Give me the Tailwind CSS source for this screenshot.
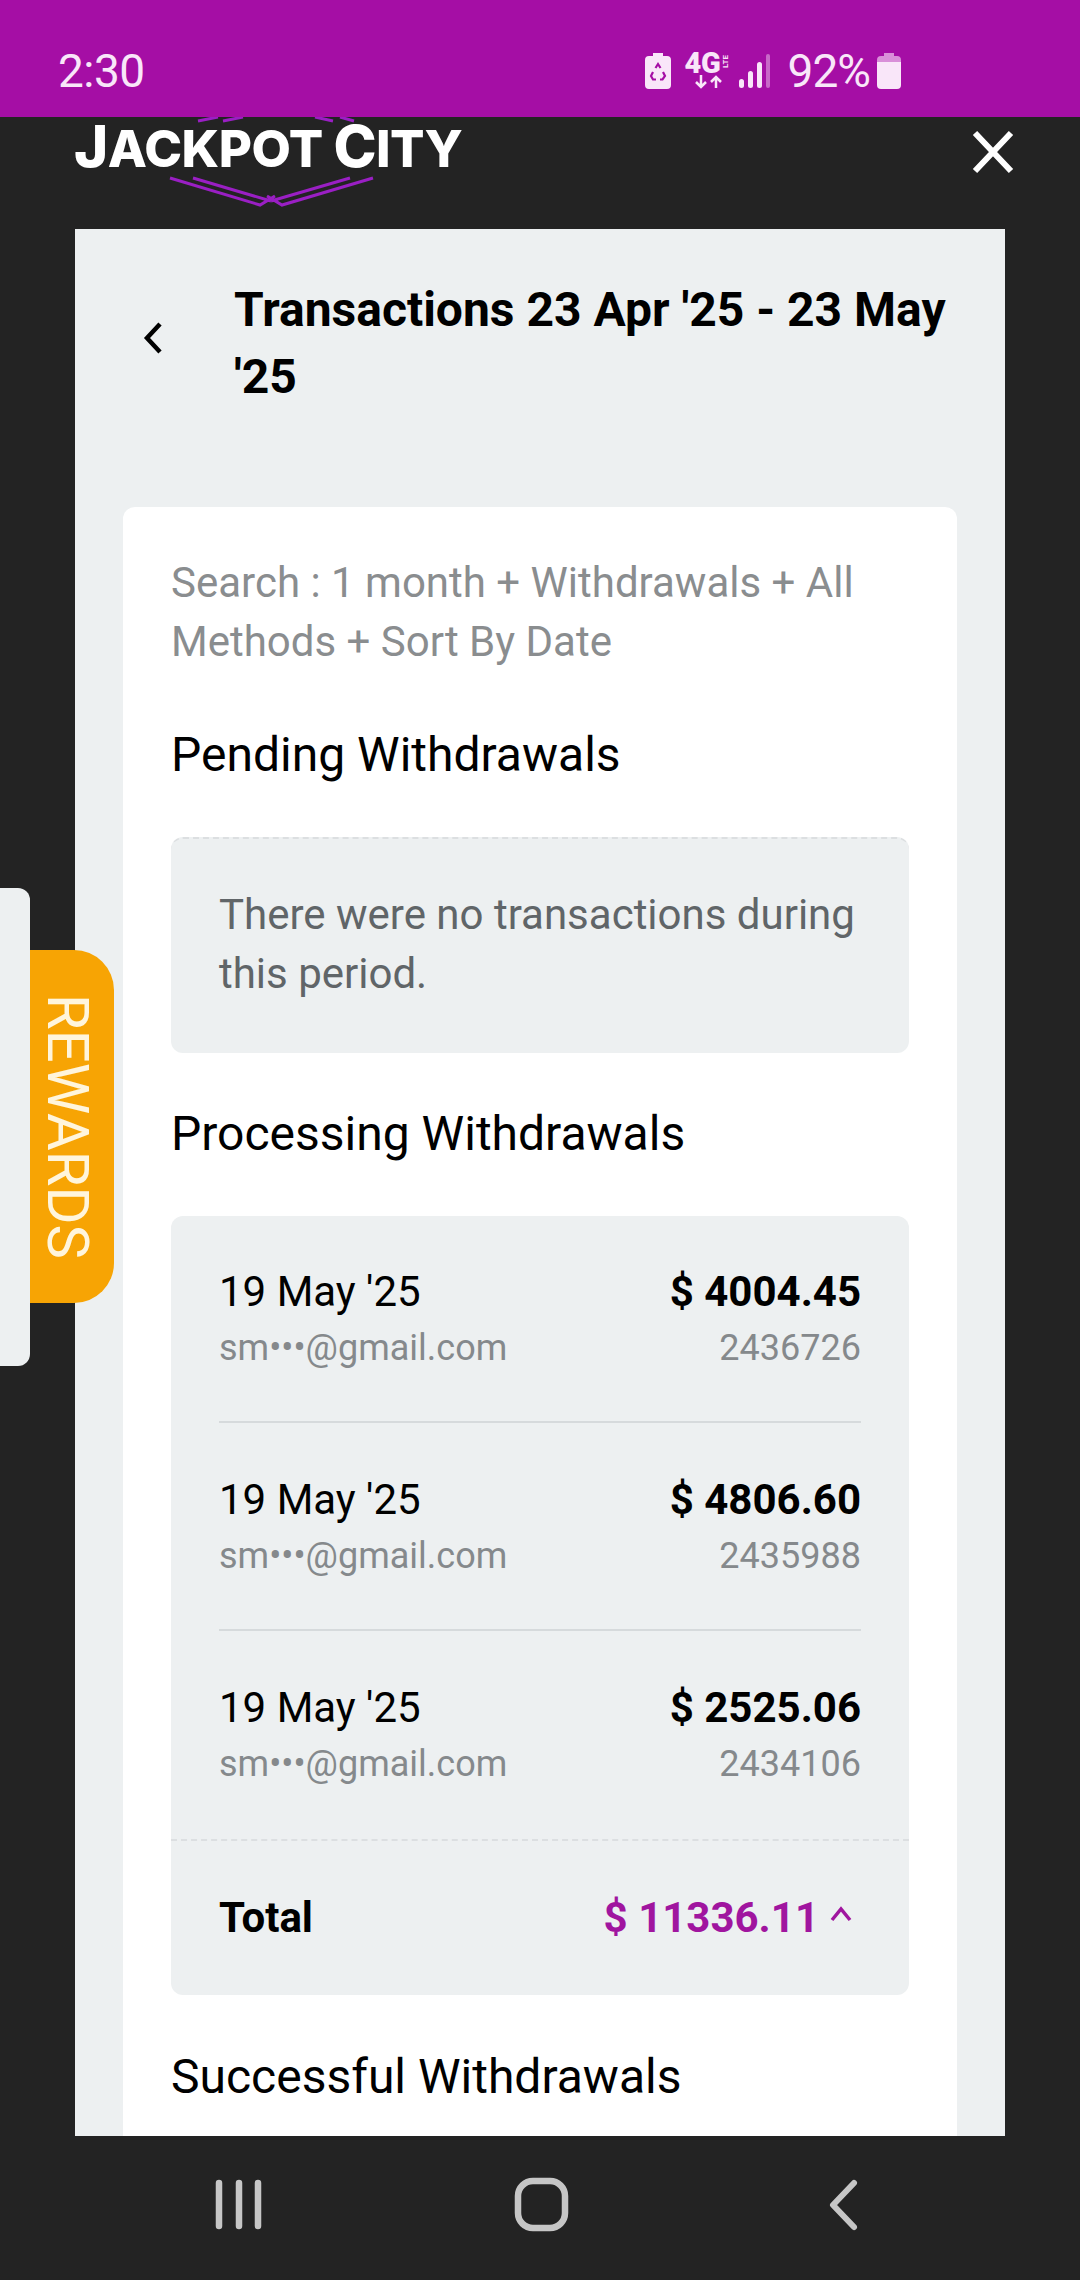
<!DOCTYPE html>
<html lang="en">
  <head>
    <meta charset="UTF-8" />
    <meta name="viewport" content="width=device-width, initial-scale=1.0" />
    <title>Transactions</title>
    <script src="https://cdn.jsdelivr.net/npm/@tailwindcss/browser@4"></script>
  </head>
  <body class="font-['Roboto',sans-serif] bg-[#232323]">
    <div class="relative w-[1080px] h-[2280px] overflow-hidden flex flex-col bg-[#232323]">
      <!-- status bar -->
      <div class="h-[117px] shrink-0 bg-[#a50ea5] flex items-center justify-between pt-[24px] pl-[58px] pr-[179px] text-[#f9e6f9] relative z-10">
        <span class="text-[46px] leading-none font-normal tracking-[-0.5px]">2:30</span>
        <div class="flex items-center">
          <svg width="26" height="36" viewBox="0 0 26 36" class="mr-[14px]">
            <path d="M8 0h10v3h4a4 4 0 0 1 4 4v25a4 4 0 0 1-4 4H4a4 4 0 0 1-4-4V7a4 4 0 0 1 4-4h4z" fill="#f9e6f9"/>
            <path d="M10.500 15l2.500-4 2.500 4M18 19l2 4-2.500 3.500H15M11 26.500H8L6 23l2-4" stroke="#a50ea5" stroke-width="2.200" fill="none"/>
          </svg>
          <div class="relative w-[47px] h-[36px] mr-[7px]">
            <span class="absolute left-0 top-[-5px] font-['Roboto',sans-serif] font-black text-[29px] leading-[30px] tracking-[-0.5px]">4G</span>
            <span class="absolute left-[36px] top-[2px] [writing-mode:vertical-rl] rotate-180 font-bold text-[8px] leading-[9px]">LTE</span>
            <svg width="34" height="14" viewBox="0 0 34 14" class="absolute left-[8px] top-[22px]">
              <path d="M8 0v12M3 7l5 5 5-5M23 13V2M18 7l5-5 5 5" stroke="#f9e6f9" stroke-width="2.500" fill="none"/>
            </svg>
          </div>
          <svg width="32" height="36" viewBox="0 0 32 36" class="mr-[17px]">
            <rect x="0" y="26" width="5" height="9" rx="2.500" fill="#f9e6f9"/>
            <rect x="9" y="18" width="5" height="17" rx="2.500" fill="#f9e6f9"/>
            <rect x="18" y="9" width="5" height="26" rx="2.500" fill="#f9e6f9"/>
            <rect x="27" y="1" width="4" height="34" rx="2" fill="#c868c8"/>
          </svg>
          <span class="text-[46px] leading-none font-normal tracking-[-1px]">92%</span>
          <svg width="24" height="36" viewBox="0 0 24 36" class="ml-[7px]">
            <path d="M7 0h10v3h3a4 4 0 0 1 4 4v5H0V7a4 4 0 0 1 4-4h3z" fill="#d98fd9"/>
            <path d="M0 9h24v23a4 4 0 0 1-4 4H4a4 4 0 0 1-4-4z" fill="#f9e6f9"/>
          </svg>
        </div>
      </div>

      <!-- header with logo and close -->
      <div class="h-[112px] shrink-0 relative flex items-start justify-between pl-[75px] pr-[66px]">
        <div class="relative w-[392px] h-[112px]">
          <svg width="392" height="112" viewBox="0 0 392 112" class="absolute left-0 top-0">
            <path d="M123 4l20-4M148 4l20-4M240 0l18 4M265 0l14 4" stroke="#9a1fc4" stroke-width="3" fill="none"/>
            <path d="M95 61l90 27 15-9M298 61l-91 27-15-9M118 61l78 23M275 61l-79 23" stroke="#9a1fc4" stroke-width="3" fill="none"/>
          </svg>
          <span class="absolute left-[-1px] top-[-1px] whitespace-nowrap font-['Inter',sans-serif] font-extrabold text-white text-[51px] leading-[60px] tracking-[-0.5px]"><span class="text-[58px]">J</span>ACKPOT <span class="text-[58px]">C</span>ITY</span>
        </div>
        <svg width="42" height="44" viewBox="0 0 42 44" class="mt-[13px]">
          <path d="M3 3l36 38M39 3L3 41" stroke="#fff" stroke-width="6" fill="none"/>
        </svg>
      </div>

      <!-- panel -->
      <div class="h-[1907px] shrink-0 mx-[75px] bg-[#edf0f1] overflow-hidden px-[48px]">
        <div class="flex items-start pt-[47px] pb-[97px]">
          <svg width="22" height="34" viewBox="0 0 22 34" class="ml-[19px] mr-[70px] mt-[45px] shrink-0">
            <path d="M18 3L5 17l13 14" stroke="#000" stroke-width="4.500" fill="none"/>
          </svg>
          <h1 class="text-[48px] leading-[67px] font-bold text-black -mr-[8px]">Transactions 23 Apr '25 - 23 May '25</h1>
        </div>

        <div class="bg-white rounded-t-[12px] px-[48px] pt-[46px] pb-[100px]">
          <p class="text-[42px] leading-[59px] text-[#8a8d8f]">Search : 1 month + Withdrawals + All Methods + Sort By Date</p>
          <h2 class="text-[48px] leading-[64px] text-black mt-[52px]">Pending Withdrawals</h2>

          <div class="mt-[50px] h-[216px] bg-[#edf0f1] rounded-[12px] border-t-2 border-dashed border-[#dcdfe1] px-[48px] pt-[46px]">
            <p class="text-[42px] leading-[59px] text-[#606568]">There were no transactions during this period.</p>
          </div>

          <h2 class="text-[48px] leading-[64px] text-black mt-[49px]">Processing Withdrawals</h2>

          <div class="mt-[50px] bg-[#edf0f1] rounded-[12px]">
            <div class="px-[48px]">
              <div class="h-[207px] pt-[46px] border-b-2 border-[#d6dadc] flex justify-between">
                <div>
                  <p class="text-[42px] leading-[60px] text-black">19 May '25</p>
                  <p class="text-[36px] leading-[52px] text-[#85898c]">sm•••@gmail.com</p>
                </div>
                <div class="text-right">
                  <p class="text-[42px] leading-[60px] font-bold text-black">$ 4004.45</p>
                  <p class="text-[36px] leading-[52px] text-[#85898c]">2436726</p>
                </div>
              </div>
              <div class="h-[208px] pt-[47px] border-b-2 border-[#d6dadc] flex justify-between">
                <div>
                  <p class="text-[42px] leading-[60px] text-black">19 May '25</p>
                  <p class="text-[36px] leading-[52px] text-[#85898c]">sm•••@gmail.com</p>
                </div>
                <div class="text-right">
                  <p class="text-[42px] leading-[60px] font-bold text-black">$ 4806.60</p>
                  <p class="text-[36px] leading-[52px] text-[#85898c]">2435988</p>
                </div>
              </div>
              <div class="h-[208px] pt-[47px] flex justify-between">
                <div>
                  <p class="text-[42px] leading-[60px] text-black">19 May '25</p>
                  <p class="text-[36px] leading-[52px] text-[#85898c]">sm•••@gmail.com</p>
                </div>
                <div class="text-right">
                  <p class="text-[42px] leading-[60px] font-bold text-black">$ 2525.06</p>
                  <p class="text-[36px] leading-[52px] text-[#85898c]">2434106</p>
                </div>
              </div>
            </div>
            <div class="h-[156px] pb-[2px] border-t-2 border-dashed border-[#dcdfe1] px-[48px] flex items-center justify-between">
              <span class="text-[42px] font-bold text-black">Total</span>
              <span class="flex items-center text-[42px] font-bold text-[#a0159f]">$ 11336.11
                <svg width="24" height="16" viewBox="0 0 24 16" class="ml-[10px] mr-[8px] -mt-[6px]">
                  <path d="M3 14l9-11 9 11" stroke="#a0159f" stroke-width="3.500" fill="none"/>
                </svg>
              </span>
            </div>
          </div>

          <h2 class="text-[48px] leading-[64px] text-black mt-[50px]">Successful Withdrawals</h2>
        </div>
      </div>

      <!-- nav bar -->
      <div class="flex-1 bg-[#232323] relative">
        <svg width="1080" height="144" viewBox="0 0 1080 144" class="block">
          <path d="M219 47v43M239 47v43M258 47v43" stroke="#c6c6c6" stroke-width="6.500" stroke-linecap="round"/>
          <rect x="518" y="45" width="47" height="47" rx="15" stroke="#c6c6c6" stroke-width="6.500" fill="none"/>
          <path d="M854 47l-21 22 21 22" stroke="#c6c6c6" stroke-width="6" stroke-linecap="round" stroke-linejoin="round" fill="none"/>
        </svg>
      </div>

      <!-- rewards tab -->
      <div class="absolute left-0 top-[888px] w-[30px] h-[478px] bg-[#edf0f1] rounded-r-[12px]"></div>
      <div class="absolute left-[30px] top-[950px] w-[84px] h-[353px] bg-[#f7a404] rounded-r-[40px] flex items-center justify-center pr-[8px]">
        <span class="[writing-mode:vertical-rl] text-[58px] leading-none text-[#fff5dc]">REWARDS</span>
      </div>
    </div>
  </body>
</html>
